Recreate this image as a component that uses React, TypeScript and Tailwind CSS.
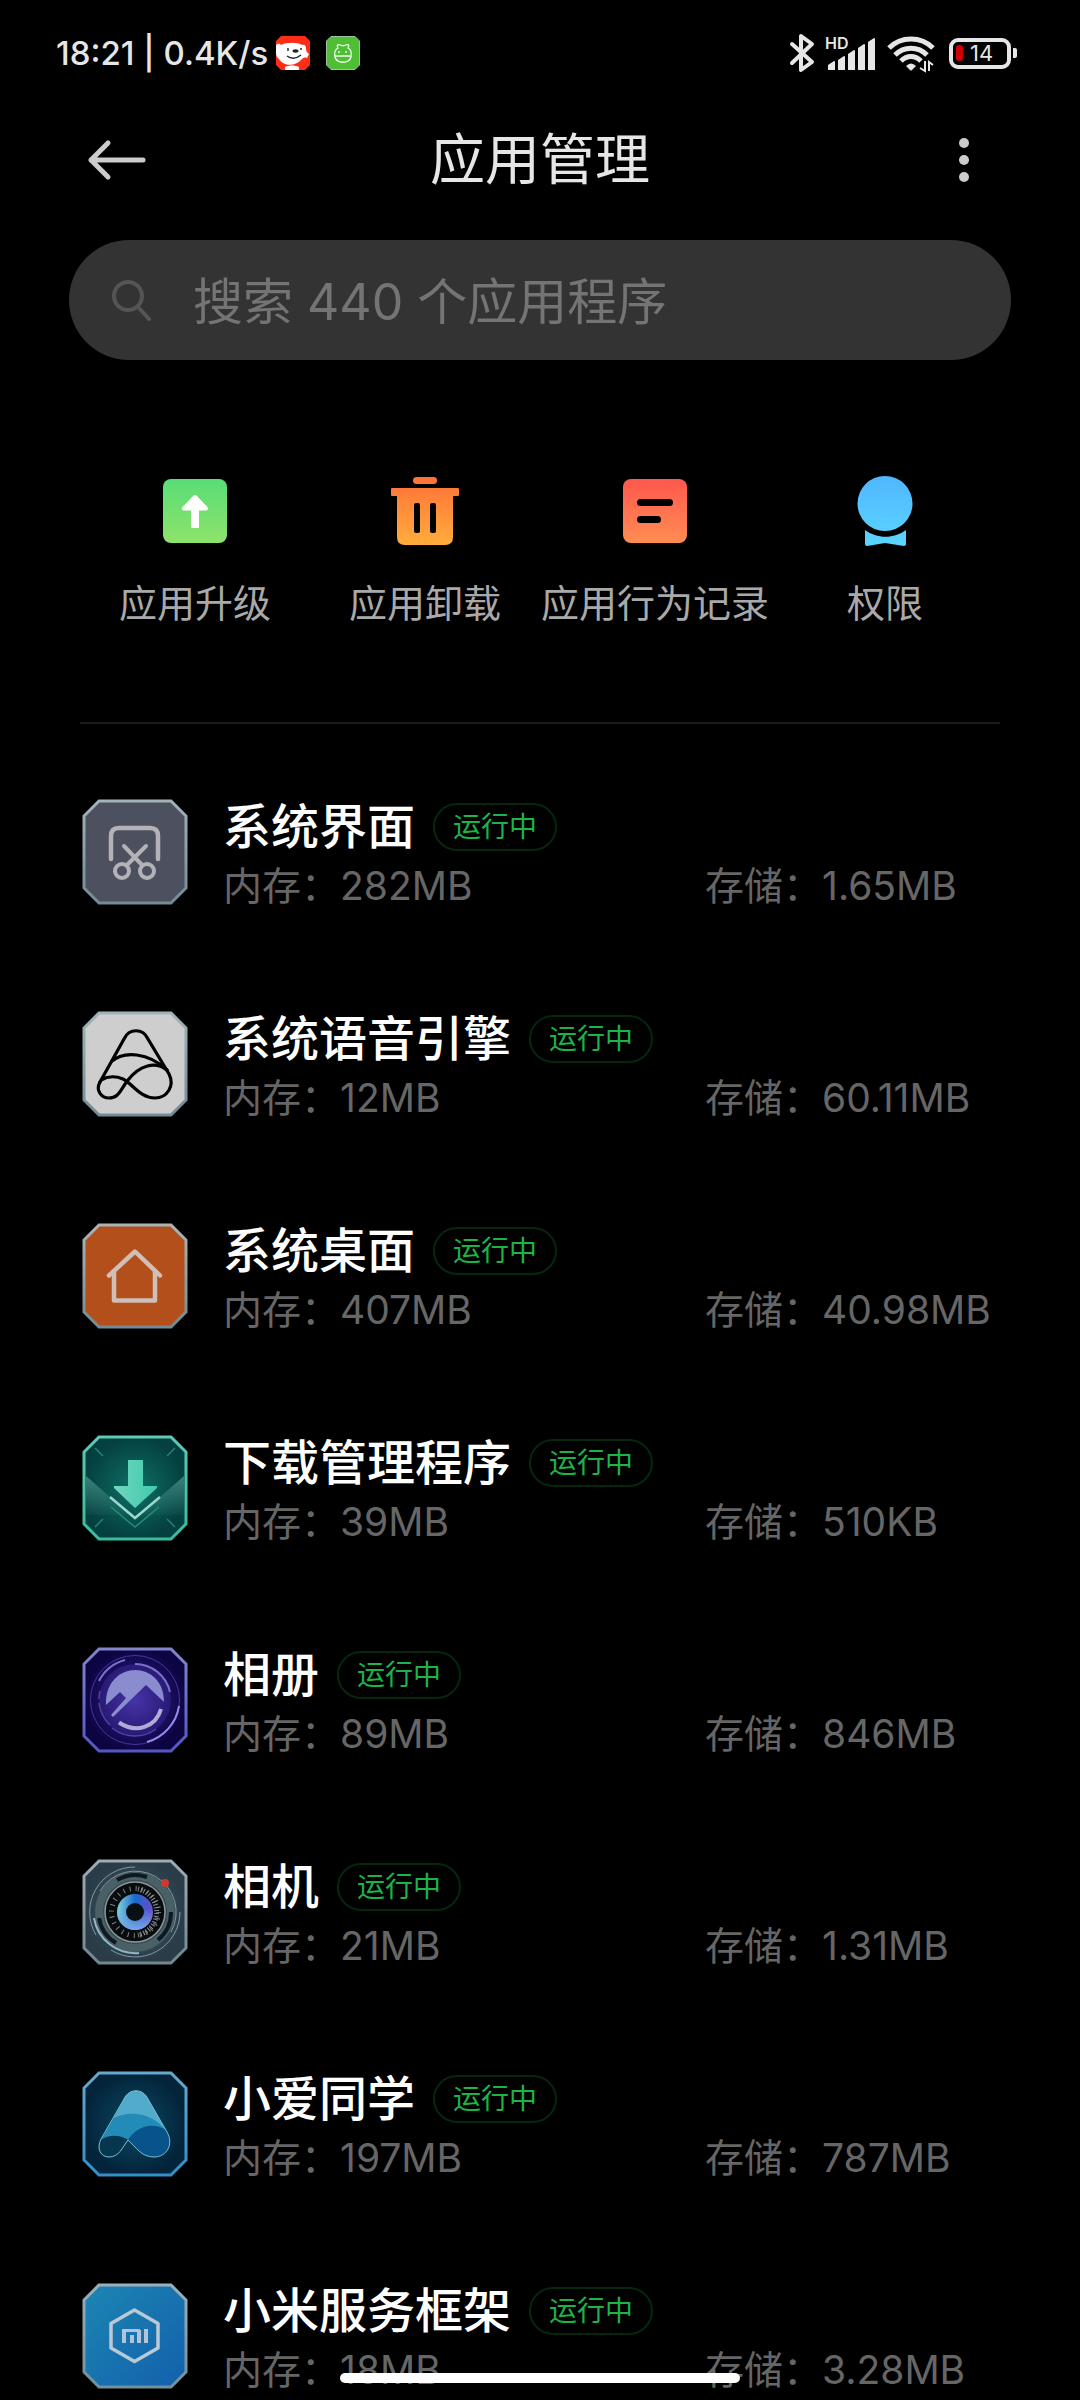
import { ReactNode } from "react";

const OCTAGON = "M17 2H89L104 17V89L89 104H17L2 89V17Z";

type App = {
  name: string;
  memory: string;
  storage: string;
  icon: ReactNode;
};

const shortcuts = [
  { label: "应用升级", icon: <UpgradeIcon /> },
  { label: "应用卸载", icon: <UninstallIcon /> },
  { label: "应用行为记录", icon: <RecordIcon /> },
  { label: "权限", icon: <PermissionIcon /> },
];

const apps: App[] = [
  { name: "系统界面", memory: "282MB", storage: "1.65MB", icon: <SystemUiIcon /> },
  { name: "系统语音引擎", memory: "12MB", storage: "60.11MB", icon: <VoiceIcon /> },
  { name: "系统桌面", memory: "407MB", storage: "40.98MB", icon: <HomeIcon /> },
  { name: "下载管理程序", memory: "39MB", storage: "510KB", icon: <DownloadIcon /> },
  { name: "相册", memory: "89MB", storage: "846MB", icon: <GalleryIcon /> },
  { name: "相机", memory: "21MB", storage: "1.31MB", icon: <CameraIcon /> },
  { name: "小爱同学", memory: "197MB", storage: "787MB", icon: <XiaoAiIcon /> },
  { name: "小米服务框架", memory: "18MB", storage: "3.28MB", icon: <ServiceIcon /> },
];

export default function App() {
  return (
    <div className="flex h-screen flex-col overflow-hidden bg-black font-[Inter,'Noto_Sans_CJK_SC',sans-serif] text-white">
      <StatusBar />

      <header className="flex h-[108px] shrink-0 items-center justify-between px-[84px]">
        <button type="button" aria-label="返回">
          <svg aria-hidden="true" className="h-[44px] w-[64px]" viewBox="0 0 64 44" fill="none" stroke="#cccccc" strokeWidth="5" strokeLinecap="round" strokeLinejoin="round">
            <path d="M59 22H7M24 5 7 22l17 17" />
          </svg>
        </button>
        <h1 className="pb-[2px] text-[55px] leading-[80px] font-normal text-[#e6e6e6]">应用管理</h1>
        <button type="button" aria-label="更多" className="flex w-[64px] justify-center">
          <svg aria-hidden="true" className="h-[44px] w-[10px]" viewBox="0 0 10 44" fill="#cccccc">
            <circle cx="5" cy="5" r="5" />
            <circle cx="5" cy="22" r="5" />
            <circle cx="5" cy="39" r="5" />
          </svg>
        </button>
      </header>

      <main className="flex-1 overflow-y-auto [scrollbar-width:none]">
        <label className="mx-[69px] mt-[26px] flex h-[120px] items-center gap-10 rounded-full bg-[#333333] pr-12 pl-[42px]">
          <svg aria-hidden="true" className="size-[42px] shrink-0" viewBox="0 0 42 42" fill="none" stroke="#555555" strokeWidth="4" strokeLinecap="round">
            <circle cx="17" cy="17" r="14" />
            <path d="m27 28 11 12" />
          </svg>
          <input
            type="search"
            aria-label="搜索应用程序"
            placeholder="搜索 440 个应用程序"
            className="min-w-0 flex-1 bg-transparent pt-1 text-[50px] leading-[72px] text-white outline-none placeholder:text-[#747474]"
          />
        </label>

        <nav className="mt-[115px] grid grid-cols-4 px-20">
          {shortcuts.map((shortcut) => (
            <button key={shortcut.label} type="button" className="flex flex-col items-center gap-7">
              {shortcut.icon}
              <span className="text-[38px] leading-[56px] whitespace-nowrap text-[#a9a9a9]">{shortcut.label}</span>
            </button>
          ))}
        </nav>

        <hr className="mx-20 mt-[91px] mb-[22px] border-t-2 border-[#1b1b1b]" />

        <ul>
          {apps.map((app) => (
            <AppRow key={app.name} app={app} />
          ))}
        </ul>
      </main>

      <div className="fixed bottom-[17px] left-1/2 h-[10px] w-[400px] -translate-x-1/2 rounded-full bg-white" />
    </div>
  );
}

function AppRow({ app }: { app: App }) {
  return (
    <li className="flex h-[212px] items-center gap-[35px] pr-10 pl-[82px]">
      {app.icon}
      <div className="min-w-0 flex-1 pt-[7px]">
        <div className="flex items-center gap-[18px]">
          <h2 className="text-[48px] leading-[60px] font-medium">{app.name}</h2>
          <span className="flex h-[48px] items-center rounded-full border-2 border-[#06270f] px-[18px] text-[28px] leading-[40px] text-[#1cb545]">
            运行中
          </span>
        </div>
        <div className="grid grid-cols-[59%_41%] text-[39px] leading-[58px] text-[#666666]">
          <span>内存：{app.memory}</span>
          <span>存储：{app.storage}</span>
        </div>
      </div>
    </li>
  );
}

function StatusBar() {
  return (
    <div className="flex h-[106px] shrink-0 items-center justify-between pr-[63px] pl-[56px]">
      <div className="flex items-center">
        <span className="text-[33px] leading-[44px] font-medium text-[#e6e6e6]">18:21 | 0.4K/s</span>
        <svg aria-hidden="true" className="ml-2 size-[34px]" viewBox="0 0 34 34">
          <path d="M5 0H29L34 5V29L29 34H5L0 29V5Z" fill="#ff2d16" />
          <path d="M0 9c2-2 4-1 5 0 5-3 17-3 21 0 3-1 4 1 4 4 0 3 2 4 3 5l-2 4c-3-1-4 0-6 2-6 7-18 6-22-1-2-2-3-3-3-6z" fill="#fff" />
          <path d="M9 31c4-2 10-2 14 0v3H9z" fill="#fff" />
          <path d="M12 12v3M25 12v2M11 20c4 3 9 3 14-1" fill="none" stroke="#222" strokeWidth="1.4" />
          <ellipse cx="19.500" cy="15" rx="3" ry="1.700" fill="#222" />
        </svg>
        <svg aria-hidden="true" className="ml-4 size-[34px]" viewBox="0 0 34 34">
          <path d="M5 .5H29L33.500 5V29L29 33.500H5L.5 29V5Z" fill="#4fbe34" stroke="#9ac7a0" />
          <g fill="none" stroke="#f1fff0" strokeWidth="1.300">
            <path d="M9 21c-1-5 1-8 3-9-2-3 0-4 2-3 2 1 4 1 6 0 2-1 4 0 2 3 2 1 4 4 3 9-2 7-14 7-16 0zM9 20h16M13 15v2M20 15v2" />
          </g>
        </svg>
      </div>

      <div className="flex items-center text-[#e6e6e6]">
        <svg aria-hidden="true" className="h-[40px] w-[26px]" viewBox="0 0 26 40" fill="none" stroke="currentColor" strokeWidth="4" strokeLinejoin="round" strokeLinecap="round">
          <path d="M3 11 23 29 12 37V3l11 8L3 30" />
        </svg>
        <svg aria-hidden="true" className="ml-[10px] h-[40px] w-[52px]" viewBox="0 0 52 40" fill="currentColor">
          <text x="0" y="16" fontSize="16" fontWeight="600">HD</text>
          <path d="M3 32 9 28q1 0 1 1v8H3zM13 27l6-4q1 0 1 1v13h-7zM23 21l6-4q1 0 1 1v19h-7zM33 15l6-4q1 0 1 1v25h-7zM43 9l6-4q1 0 1 1v31h-7z" />
        </svg>
        <svg aria-hidden="true" className="ml-[10px] h-[40px] w-[48px]" viewBox="0 0 48 40" fill="none" stroke="currentColor" strokeWidth="5">
          <path d="M2 15C14 3 34 3 46 15M8 22c9-9 23-9 32 0M14 28c6-6 14-6 20 0" />
          <path d="M19 33q5-5 10 0l-4 4q-1 1-2 0z" fill="currentColor" stroke="none" />
          <path d="M38 28v10l-5-3M42 38V29l4 3" strokeWidth="2" />
        </svg>
        <div className="ml-[14px] flex h-[31px] w-[62px] items-center rounded-[9px] border-4 border-[#e6e6e6] pl-[3px]">
          <span className="h-[16px] w-[7px] rounded-[3px] bg-[#d20000]" />
          <span className="ml-[7px] text-[22px] leading-[24px]">14</span>
        </div>
        <span className="ml-[2px] h-[10px] w-[4px] rounded-r-[2px] bg-[#e6e6e6]" />
      </div>
    </div>
  );
}

function UpgradeIcon() {
  return (
    <svg aria-hidden="true" className="size-[72px]" viewBox="0 0 72 72">
      <linearGradient id="upgrade" x2="0" y2="1">
        <stop stopColor="#59dd77" />
        <stop offset="1" stopColor="#8ee36a" />
      </linearGradient>
      <rect x="4" y="4" width="64" height="64" rx="8" fill="url(#upgrade)" />
      <path d="M36 22 25 33.500H47Z" fill="#fff" stroke="#fff" strokeWidth="4" strokeLinejoin="round" />
      <rect x="32" y="32" width="8" height="21" rx="1" fill="#fff" />
    </svg>
  );
}

function UninstallIcon() {
  return (
    <svg aria-hidden="true" className="size-[72px]" viewBox="0 0 72 72">
      <linearGradient id="uninstall" gradientUnits="userSpaceOnUse" x1="0" y1="2" x2="0" y2="70">
        <stop stopColor="#ff7038" />
        <stop offset="1" stopColor="#ffad3c" />
      </linearGradient>
      <g fill="url(#uninstall)">
        <rect x="24" y="2" width="24" height="7" rx="3.500" />
        <path d="M3 13H69q1 0 1 1v6q0 1-1 1H64V62q0 8-8 8H16q-8 0-8-8V21H3q-1 0-1-1V14q0-1 1-1z" />
      </g>
      <rect x="25" y="28" width="6" height="30" rx="2" />
      <rect x="41" y="28" width="6" height="30" rx="2" />
    </svg>
  );
}

function RecordIcon() {
  return (
    <svg aria-hidden="true" className="size-[72px]" viewBox="0 0 72 72">
      <linearGradient id="record" x2="0" y2="1">
        <stop stopColor="#ff584e" />
        <stop offset="1" stopColor="#ff8d52" />
      </linearGradient>
      <rect x="4" y="4" width="64" height="64" rx="8" fill="url(#record)" />
      <rect x="18" y="24" width="36" height="7" rx="3.500" />
      <rect x="18" y="41" width="24" height="7" rx="3.500" />
    </svg>
  );
}

function PermissionIcon() {
  return (
    <svg aria-hidden="true" className="size-[72px]" viewBox="0 0 72 72">
      <linearGradient id="permission" gradientUnits="userSpaceOnUse" x1="0" y1="0" x2="0" y2="72">
        <stop stopColor="#50b6ff" />
        <stop offset="1" stopColor="#5bd6ff" />
      </linearGradient>
      <g fill="url(#permission)">
        <circle cx="36" cy="28.500" r="27.500" />
        <path d="M16 55C28 64 45 64 57 55V69q0 2-2 2L36 68 18 71q-2 0-2-2z" />
      </g>
    </svg>
  );
}

function SystemUiIcon() {
  return (
    <svg aria-hidden="true" className="size-[106px] shrink-0" viewBox="0 0 106 106" fill="none">
      <Frame id="system-ui" top="#a3b3b8" bottom="#728b95" fill="#4c505f" />
      <g stroke="#b3b3b7" strokeWidth="4.500" strokeLinecap="round">
        <path d="M29 60V37q0-8 8-8H68q8 0 8 8V60" />
        <path d="M42 47 60 66M64 47 45 66" strokeWidth="4" />
        <circle cx="40" cy="72" r="7" strokeWidth="4" />
        <circle cx="65" cy="72" r="7" strokeWidth="4" />
      </g>
    </svg>
  );
}

function VoiceIcon() {
  return (
    <svg aria-hidden="true" className="size-[106px] shrink-0" viewBox="0 0 106 106" fill="none">
      <Frame id="voice" top="#a3b3b8" bottom="#728b95" fill="#cecece" />
      <g stroke="#000" strokeWidth="3.200" strokeLinecap="round">
        <path d="M18 71 42 28C47 17 61 17 66 28L87 63C93 75 85 87 73 87C58 87 51 73 41 68C34 65 26 65 19 69" />
        <path d="M18 71C13 80 20 87 27 87C37 87 38 79 46 69C58 54 73 50 85 59" />
        <path d="M30 50C42 40 66 41 85 59" />
      </g>
    </svg>
  );
}

function HomeIcon() {
  return (
    <svg aria-hidden="true" className="size-[106px] shrink-0" viewBox="0 0 106 106" fill="none">
      <Frame id="home" top="#aab4b7" bottom="#728b95" fill="#b24f1a" />
      <g stroke="#d0bfb8" strokeWidth="4.500" strokeLinecap="round" strokeLinejoin="round">
        <path d="M27 52.500 53 28.500 78 52.500" />
        <path d="M32 49V77.500H73V49" />
      </g>
    </svg>
  );
}

function DownloadIcon() {
  return (
    <svg aria-hidden="true" className="size-[106px] shrink-0" viewBox="0 0 106 106" fill="none">
      <radialGradient id="download-fill">
        <stop stopColor="#0f7066" />
        <stop offset="1" stopColor="#04403f" />
      </radialGradient>
      <linearGradient id="download-side" x2="0" y2="1">
        <stop stopColor="#3b827c" />
        <stop offset="1" stopColor="#3b827c" stopOpacity="0" />
      </linearGradient>
      <linearGradient id="download-arrow">
        <stop stopColor="#70d6c0" />
        <stop offset="1" stopColor="#40cbaa" />
      </linearGradient>
      <Frame id="download" top="#5fc9b3" bottom="#37bd9d" fill="url(#download-fill)" />
      <path d="M4 41 53 84 102 41V80H4Z" fill="url(#download-side)" />
      <path d="m13 13 8 8M93 13l-8 8M13 92l8-8M93 92l-8-8" stroke="#277f77" strokeWidth="1.500" />
      <path d="M46 25H61V51H75V53L53 73 32 53V51H46Z" fill="url(#download-arrow)" />
      <path d="M28 62 53 83 78 62" stroke="#99d8cd" strokeWidth="2.500" />
      <path d="M29 72 53 92 77 72" stroke="#268b7d" strokeWidth="1.500" />
    </svg>
  );
}

function GalleryIcon() {
  return (
    <svg aria-hidden="true" className="size-[106px] shrink-0" viewBox="0 0 106 106" fill="none">
      <radialGradient id="gallery-fill">
        <stop stopColor="#34239b" />
        <stop offset="1" stopColor="#0d0442" />
      </radialGradient>
      <radialGradient id="gallery-disc">
        <stop stopColor="#4634a6" />
        <stop offset="1" stopColor="#281a75" />
      </radialGradient>
      <Frame id="gallery" top="#8385ca" bottom="#5357c4" fill="url(#gallery-fill)" />
      <circle cx="53" cy="53" r="44.500" stroke="#44389a" />
      <circle cx="53" cy="53" r="36" fill="url(#gallery-disc)" />
      <g stroke="#7a70cb" strokeWidth="1.500">
        <path d="M17 34A41 41 0 0 1 43 13M53 17A36 36 0 0 1 88 45" strokeWidth="2" />
        <path d="M97 59A44.500 44.500 0 0 1 65 95" stroke="#988ae8" strokeWidth="2" />
        <path d="M17 56A36 36 0 0 0 28 78M18 44A36 36 0 0 0 17 52M30 81A36 36 0 0 0 74 82" stroke="#51449f" />
      </g>
      <path d="M24 58C23 12 82 12 82 55L64 38 31 70 29 68 44 51 38 45Z" fill="#8b8cd0" />
      <path d="M37 75.500C54 87 74 80 79 62" stroke="#b1abd8" strokeWidth="4" />
    </svg>
  );
}

function CameraIcon() {
  return (
    <svg aria-hidden="true" className="size-[106px] shrink-0" viewBox="0 0 106 106" fill="none">
      <radialGradient id="camera-fill">
        <stop stopColor="#46606d" />
        <stop offset="1" stopColor="#293c48" />
      </radialGradient>
      <linearGradient id="camera-iris">
        <stop stopColor="#83d5d8" />
        <stop offset=".5" stopColor="#176bd0" />
        <stop offset="1" stopColor="#704bc7" />
      </linearGradient>
      <linearGradient id="camera-iris-low" x2="0" y2="1">
        <stop offset=".4" stopColor="#7ba5e8" stopOpacity="0" />
        <stop offset="1" stopColor="#7ba5e8" />
      </linearGradient>
      <Frame id="camera" top="#a0acb1" bottom="#708790" fill="url(#camera-fill)" />
      <circle cx="53" cy="53" r="36" stroke="#4a6067" strokeWidth="8" />
      <circle cx="53" cy="53" r="30" fill="#090c0f" stroke="#8b9897" strokeWidth="1.500" />
      <circle cx="53" cy="53" r="23.500" stroke="#7b8483" strokeWidth="5" strokeDasharray="1 5.150" />
      <path d="M56 30A23.500 23.500 0 0 1 56 76" stroke="#8c9493" strokeWidth="5" strokeDasharray="1 2" />
      <circle cx="53" cy="53" r="18" fill="url(#camera-iris)" />
      <circle cx="53" cy="53" r="18" fill="url(#camera-iris-low)" />
      <circle cx="53" cy="53" r="9" fill="#081016" />
      <path d="M35 21A37 37 0 0 1 65 18M89 53A36 36 0 0 1 76 81M17 59A36 36 0 0 0 34 84" stroke="#10191f" strokeWidth="4" />
      <g stroke="#8299a3">
        <path d="M53 8A45 45 0 0 0 14 76M18 32A41 41 0 0 1 89 73M98 53A45 45 0 0 1 29 91" />
        <path d="M12 59A42 42 0 0 0 57 94" stroke="#91b6c6" strokeWidth="2" />
      </g>
      <circle cx="83" cy="24" r="4" fill="#cf3a2d" />
    </svg>
  );
}

function XiaoAiIcon() {
  return (
    <svg aria-hidden="true" className="size-[106px] shrink-0" viewBox="0 0 106 106" fill="none">
      <radialGradient id="xiaoai-fill">
        <stop stopColor="#0b4a66" />
        <stop offset="1" stopColor="#03243a" />
      </radialGradient>
      <Frame id="xiaoai" top="#65a9cc" bottom="#338fc7" fill="url(#xiaoai-fill)" />
      <path d="M31 48 42 28C47 17 61 17 66 28L85 61C70 42 45 40 31 48Z" fill="#52abcb" />
      <path d="M19 69 31 48C47 38 72 43 83 59C66 51 54 58 46 69C38 64 28 63 19 69Z" fill="#228bb8" />
      <path d="M46 69C54 56 70 50 84 59C92 73 86 85 72 86C59 86 54 76 46 69Z" fill="#09538b" />
      <path d="M19 69C13 79 19 86 27 86C37 86 40 77 46 69C37 64 27 64 19 69Z" fill="#07364f" />
      <path d="M19 68 42 28C47 17 61 17 66 28L85 61C92 73 85 86 72 86C59 86 54 76 46 69C40 77 37 86 27 86C19 86 14 78 19 68Z" stroke="#7cc0d6" />
    </svg>
  );
}

function ServiceIcon() {
  return (
    <svg aria-hidden="true" className="size-[106px] shrink-0" viewBox="0 0 106 106" fill="none">
      <linearGradient id="service-fill" x2="1" y2="1">
        <stop stopColor="#1d86b2" />
        <stop offset="1" stopColor="#125fac" />
      </linearGradient>
      <Frame id="service" top="#9bb0b9" bottom="#728f9b" fill="url(#service-fill)" />
      <path d="M52.500 27 76 40.500V65L52.500 78.500 29 65V40.500Z" stroke="#b9c9d6" strokeWidth="3.500" strokeLinejoin="round" />
      <g fill="#b0c5d8">
        <rect x="40" y="46" width="4" height="14" />
        <rect x="40" y="46" width="18" height="3" rx="1" />
        <rect x="55" y="47" width="4" height="13" />
        <rect x="48" y="52" width="4" height="8" />
        <rect x="62" y="46" width="4" height="14" />
      </g>
    </svg>
  );
}

function Frame({ id, top, bottom, fill }: { id: string; top: string; bottom: string; fill: string }) {
  return (
    <>
      <linearGradient id={`${id}-edge`} x2="0" y2="1">
        <stop stopColor={top} />
        <stop offset="1" stopColor={bottom} />
      </linearGradient>
      <path d={OCTAGON} fill={fill} stroke={`url(#${id}-edge)`} strokeWidth="3" />
    </>
  );
}
